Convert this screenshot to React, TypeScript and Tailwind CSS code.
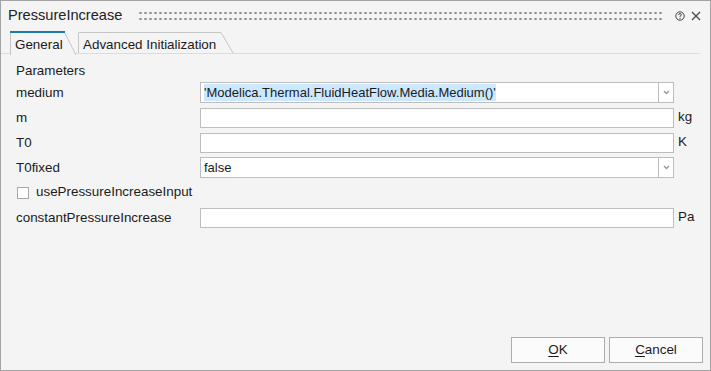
import React from 'react';

function Chevron() {
  return (
    <svg width="7" height="5" viewBox="0 0 7 5">
      <path d="M1 1 L3.5 3.5 L6 1" stroke="#999" strokeWidth="1.4" fill="none" />
    </svg>
  );
}

function TextRow({ label, unit, value }: { label: string; unit?: string; value?: string }) {
  return (
    <div className="flex items-center h-[21px]">
      <div className="w-[184px] shrink-0 text-[13.4px] pt-px">{label}</div>
      <div className="w-[474px] h-[20px] bg-white border border-[#bdbdbd] flex items-center pl-[3px]">{value}</div>
      <div className="pl-[4px] text-[13.4px]">{unit}</div>
    </div>
  );
}

function ComboRow({ label, value, selected }: { label: string; value: string; selected?: boolean }) {
  return (
    <div className="flex items-center h-[21px]">
      <div className="w-[184px] shrink-0 text-[13.4px] pt-px">{label}</div>
      <div className="w-[474px] h-[21px] flex">
        <div className="w-[459px] h-full bg-white border border-[#bdbdbd] flex items-center pl-[3px]">
          <span className={selected ? 'bg-[#cce8ff] leading-[17px]' : ''}>{value}</span>
        </div>
        <div className="w-[15px] h-full bg-white border border-l-0 border-[#bdbdbd] flex items-center justify-center">
          <Chevron />
        </div>
      </div>
    </div>
  );
}

export default function App(): React.ReactElement {
  return (
    <div className="w-[711px] h-[371px] bg-[#f4f4f4] border border-[#a3a3a3] flex flex-col text-[13px] text-[#1b1b1b] font-['Liberation_Sans',Arial,sans-serif]">
      {/* title bar */}
      <div className="h-[30px] flex items-center pl-[7px] pr-[9px]">
        <span className="text-[14.6px] text-[#222]">PressureIncrease</span>
        <div className="flex-1 ml-[16px] mr-[11px] h-[12px] bg-[radial-gradient(circle,#909090_1px,transparent_1.4px)] bg-[length:5px_6px]" />
        <svg width="10" height="10" viewBox="0 0 10 10" className="mr-[6px]">
          <circle cx="5" cy="5" r="4.2" stroke="#444" strokeWidth="1" fill="none" />
          <path d="M3.6 4 Q3.6 2.6 5 2.6 Q6.4 2.6 6.4 3.8 Q6.4 4.6 5 5.2 V5.9" stroke="#444" strokeWidth="1" fill="none" />
          <circle cx="5" cy="7.3" r="0.6" fill="#444" />
        </svg>
        <svg width="10" height="10" viewBox="0 0 10 10">
          <path d="M1 1 L9 9 M9 1 L1 9" stroke="#444" strokeWidth="1.2" />
        </svg>
      </div>

      {/* tabs */}
      <div className="flex items-end h-[23px] pl-[9px] mr-[10px] border-b border-[#dcdcdc] text-[13.4px]">
        <div className="relative w-[67px] h-[23px] -mb-px z-10">
          <svg className="absolute inset-0" width="67" height="24" viewBox="0 0 67 24">
            <path d="M0.5 24 V0.5 H54 L66 24" fill="#f4f4f4" stroke="#c6c6c6" />
            <rect x="0" y="0" width="55" height="2" fill="#1a7aaa" />
          </svg>
          <span className="relative block pl-[5px] pt-[4px]">General</span>
        </div>
        <div className="relative w-[156px] h-[21px] ml-[1px]">
          <svg className="absolute inset-0" width="156" height="21" viewBox="0 0 156 21">
            <path d="M0.5 21 V0.5 H143 L155 21" fill="#f4f4f4" stroke="#c6c6c6" />
          </svg>
          <span className="relative block pl-[5px] pt-[3px]">Advanced Initialization</span>
        </div>
      </div>

      {/* parameters */}
      <div className="pl-[15px] pt-[7px]">
        <div className="h-[21px] text-[13.4px]">Parameters</div>
        <div className="flex flex-col gap-[4px]">
          <ComboRow label="medium" value="'Modelica.Thermal.FluidHeatFlow.Media.Medium()'" selected />
          <TextRow label="m" unit="kg" />
          <TextRow label="T0" unit="K" />
          <ComboRow label="T0fixed" value="false" />
          <div className="flex items-center h-[21px] pl-[1px]">
            <div className="w-[12px] h-[12px] bg-white border border-[#a8a8a8]" />
            <span className="pl-[7px] text-[13.4px]">usePressureIncreaseInput</span>
          </div>
          <TextRow label="constantPressureIncrease" unit="Pa" />
        </div>
      </div>

      {/* buttons */}
      <div className="mt-auto flex justify-end gap-[4px] pr-[7px] pb-[7px] text-[13.4px]">
        <button className="w-[94px] h-[26px] bg-[#fbfbfb] border border-[#adadad]">
          <span className="underline underline-offset-2">O</span>K
        </button>
        <button className="w-[94px] h-[26px] bg-[#fbfbfb] border border-[#adadad]">
          <span className="underline underline-offset-2">C</span>ancel
        </button>
      </div>
    </div>
  );
}
